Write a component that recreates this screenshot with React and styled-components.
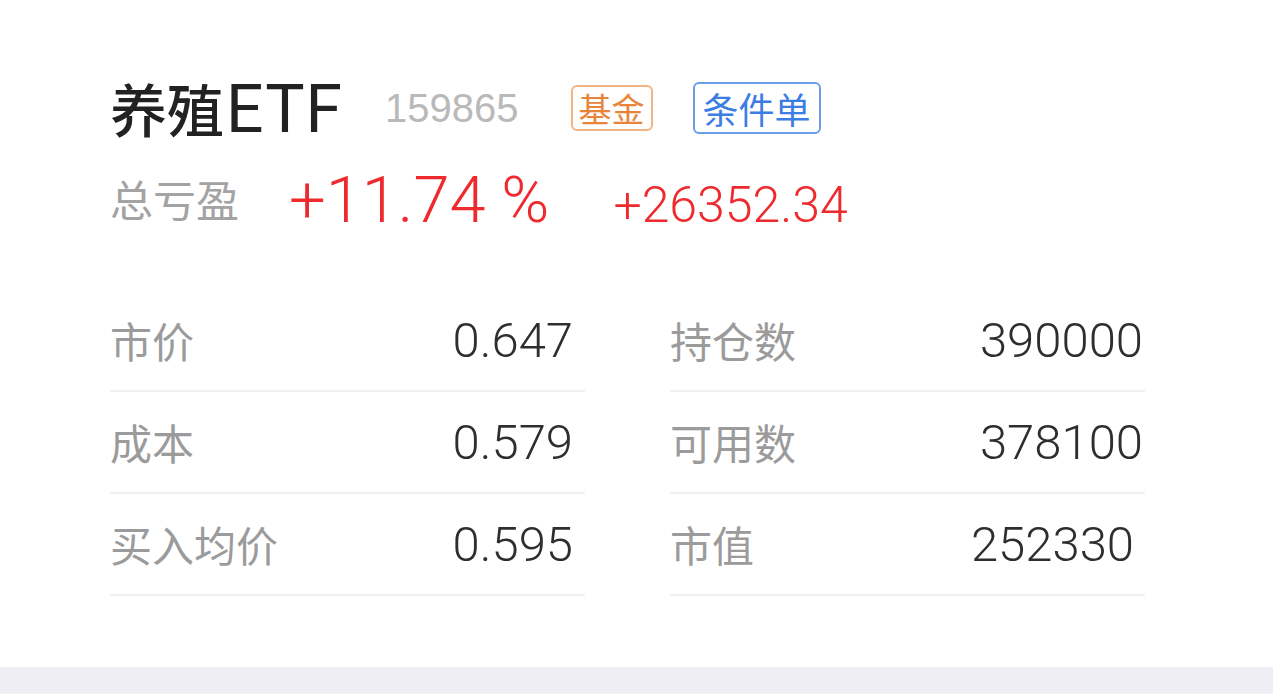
import React from "react";
import styled, { createGlobalStyle } from "styled-components";

const GlobalStyle = createGlobalStyle`
  html, body {
    margin: 0;
    padding: 0;
    background: #efeef4;
  }
  body {
    font-family: "Liberation Sans", "Noto Sans CJK SC", sans-serif;
    -webkit-font-smoothing: antialiased;
  }
`;

const Page = styled.div`
  min-height: 100vh;
  background: #efeef4;
`;

const Card = styled.section`
  box-sizing: border-box;
  height: 667px;
  background: #ffffff;
  padding: 76px 128px 0 110px;
`;

const HeaderRow = styled.div`
  display: flex;
  align-items: center;
  height: 64px;
`;

const Title = styled.h1`
  margin: 0;
  font-family: "Noto Sans CJK SC", sans-serif;
  font-size: 57px;
  font-weight: 500;
  line-height: 64px;
  color: #222222;
`;

const TitleLatin = styled.span`
  margin-left: 2px;
  font-family: Roboto, "Liberation Sans", sans-serif;
  font-size: 66px;
  font-weight: 400;
  letter-spacing: 1px;
`;

const Code = styled.span`
  margin-left: 42px;
  font-family: "Liberation Sans", sans-serif;
  font-size: 40px;
  line-height: 40px;
  color: #b9b9b9;
`;

const Tag = styled.span`
  box-sizing: border-box;
  display: inline-flex;
  align-items: center;
  justify-content: center;
  margin-left: ${(p) => p.$gap}px;
  height: ${(p) => p.$h}px;
  padding: 0 ${(p) => p.$pad}px;
  border: 2px solid ${(p) => p.$border};
  border-radius: 6px;
  font-family: "Noto Sans CJK SC", sans-serif;
  font-size: ${(p) => p.$size}px;
  line-height: 1;
  color: ${(p) => p.$color};
`;

const ProfitRow = styled.div`
  display: flex;
  align-items: baseline;
  margin-top: 24px;
  height: 72px;
`;

const ProfitLabel = styled.span`
  font-family: "Noto Sans CJK SC", sans-serif;
  font-size: 43px;
  line-height: 72px;
  color: #a3a3a3;
  transform: translateY(-5px);
`;

const ProfitNumber = styled.span`
  margin-left: ${(p) => p.$gap}px;
  font-family: Roboto, "Liberation Sans", sans-serif;
  font-weight: 300;
  font-size: ${(p) => p.$size}px;
  line-height: 72px;
  color: #ee2a2e;
`;

const Grid = styled.div`
  display: grid;
  grid-template-columns: 475px 475px;
  column-gap: 85px;
  margin-top: 54px;
`;

const Cell = styled.div`
  display: flex;
  align-items: center;
  justify-content: space-between;
  height: 102px;
  box-sizing: border-box;
  border-bottom: 2px solid #f1f1f1;
`;

const Label = styled.span`
  font-family: "Noto Sans CJK SC", sans-serif;
  font-size: 42px;
  line-height: 1;
  color: #9b9b9b;
`;

const Value = styled.span`
  padding-right: ${(p) => p.$inset}px;
  font-family: Roboto, "Liberation Sans", sans-serif;
  font-weight: 300;
  font-size: 49px;
  line-height: 1;
  color: #2e2e2e;
`;

const rows = [
  [{ label: "市价", value: "0.647", inset: 12 }, { label: "持仓数", value: "390000", inset: 2 }],
  [{ label: "成本", value: "0.579", inset: 12 }, { label: "可用数", value: "378100", inset: 2 }],
  [{ label: "买入均价", value: "0.595", inset: 12 }, { label: "市值", value: "252330", inset: 11 }],
];

export default function App() {
  return (
    <Page>
      <GlobalStyle />
      <Card>
        <HeaderRow>
          <Title>
            养殖<TitleLatin>ETF</TitleLatin>
          </Title>
          <Code>159865</Code>
          <Tag $gap={52} $h={46} $pad={6} $size={33} $color="#e8853a" $border="#f1b487">
            基金
          </Tag>
          <Tag $gap={40} $h={52} $pad={8} $size={36} $color="#3b7de4" $border="#6c9de9">
            条件单
          </Tag>
        </HeaderRow>
        <ProfitRow>
          <ProfitLabel>总亏盈</ProfitLabel>
          <ProfitNumber $gap={50} $size={65}>+11.74 %</ProfitNumber>
          <ProfitNumber $gap={64} $size={50}>+26352.34</ProfitNumber>
        </ProfitRow>
        <Grid>
          {rows.flat().map((item) => (
            <Cell key={item.label}>
              <Label>{item.label}</Label>
              <Value $inset={item.inset}>{item.value}</Value>
            </Cell>
          ))}
        </Grid>
      </Card>
    </Page>
  );
}
